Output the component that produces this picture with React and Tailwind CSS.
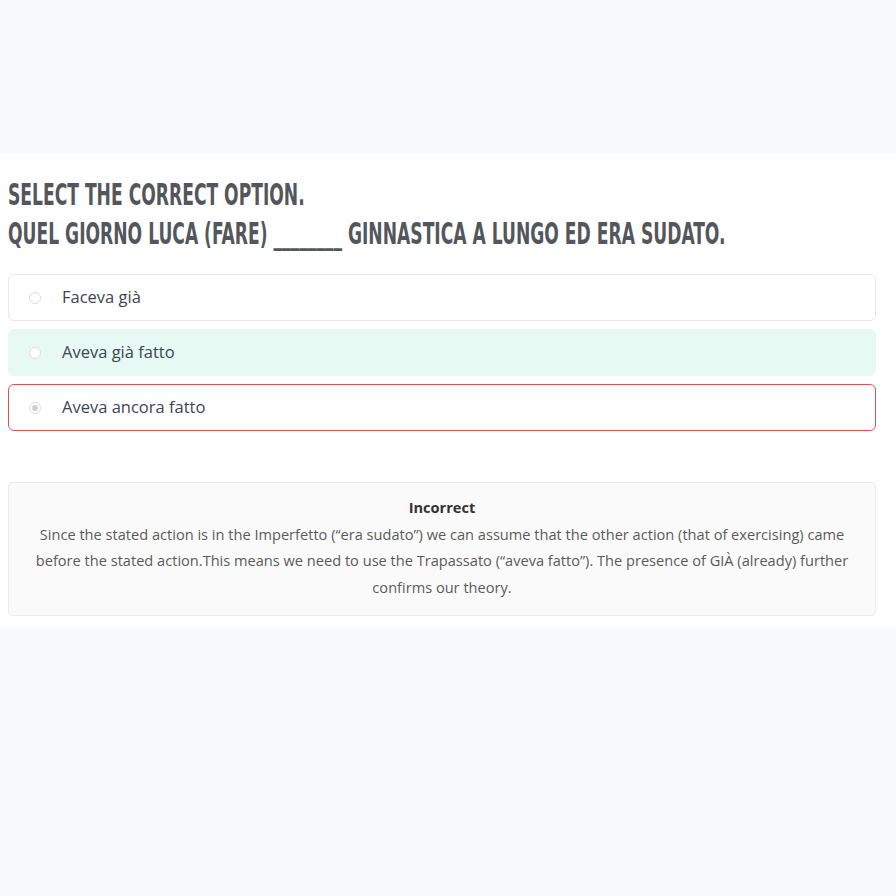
import React from 'react';

const options = [
  { id: 1, label: 'Faceva già', state: 'idle' },
  { id: 2, label: 'Aveva già fatto', state: 'correct' },
  { id: 3, label: 'Aveva ancora fatto', state: 'wrong' },
];

const Radio = ({ checked }) => (
  <span className="w-[12px] h-[12px] rounded-full border border-[#dcdcdc] bg-white flex items-center justify-center shrink-0">
    {checked && <span className="w-[6px] h-[6px] rounded-full bg-[#d0d0d0]" />}
  </span>
);

const App = () => {
  const rowStyle = {
    idle: 'bg-white border-[#e8e8e8]',
    correct: 'bg-[#e6f9f2] border-[#e6f9f2]',
    wrong: 'bg-white border-[#d9534f]',
  };

  return (
    <div className="min-h-screen bg-[#f8f9fb] pt-[153px] font-['Open_Sans',sans-serif]">
      <div className="bg-white pl-2 pr-5 pt-[22px] pb-[11px]">
        <h2 className="font-['DejaVu_Sans_Condensed','DejaVu_Sans',sans-serif] font-bold uppercase text-[#53575c] text-[30px] leading-[39px] whitespace-nowrap">
          <span className="block origin-left scale-x-[0.635]">Select the correct option.</span>
          <span className="block origin-left scale-x-[0.635]">
            Quel giorno Luca (fare) ________ ginnastica a lungo ed era sudato.
          </span>
        </h2>

        <div className="mt-[21px] flex flex-col gap-[8px]">
          {options.map((opt) => (
            <div
              key={opt.id}
              className={`h-[47px] flex items-center rounded-[6px] border pl-[20px] ${rowStyle[opt.state]}`}
            >
              <Radio checked={opt.state === 'wrong'} />
              <span className="ml-[21px] text-[16.5px] text-[#3b4651]">
                {opt.label}
              </span>
            </div>
          ))}
        </div>

        <div className="mt-[51px] bg-[#fafafa] border border-[#ececec] rounded-[4px] px-4 pt-[11px] pb-[15px] text-center text-[14.6px] leading-[26.5px] text-[#5a5a5a]">
          <p className="font-bold text-[#333]">Incorrect</p>
          <p>
            Since the stated action is in the Imperfetto (“era sudato”) we can assume that the other action (that of exercising) came before the stated action.This means we need to use the Trapassato (“aveva fatto”). The presence of GIÀ (already) further confirms our theory.
          </p>
        </div>
      </div>
    </div>
  );
};

export default App;
